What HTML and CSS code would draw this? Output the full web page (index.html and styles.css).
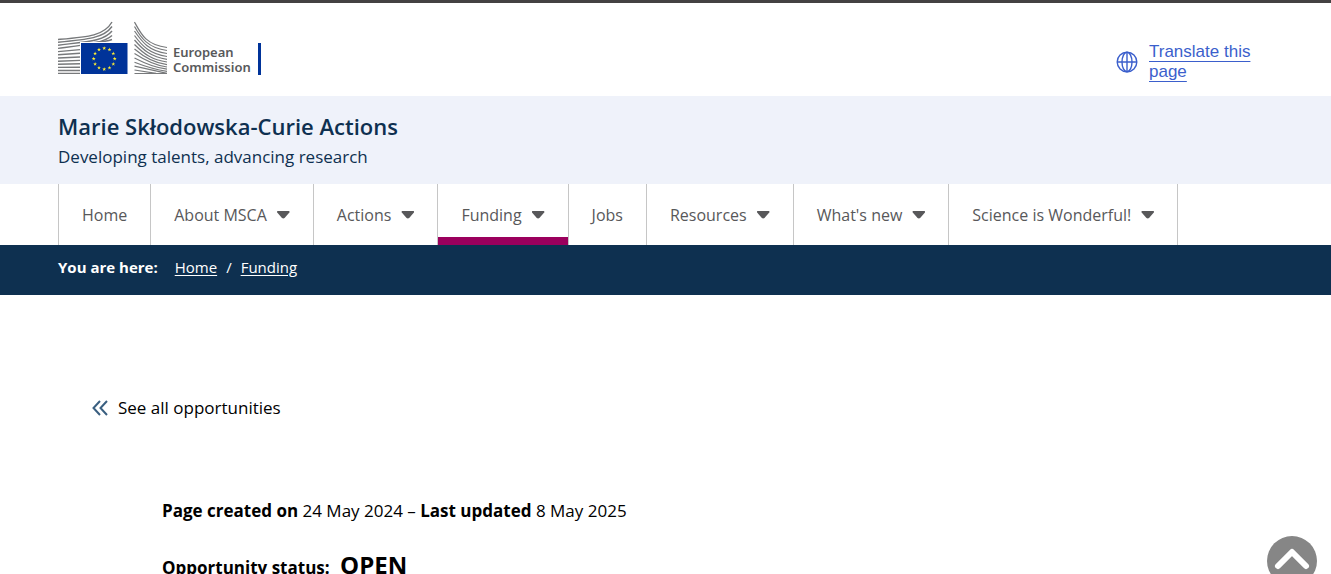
FILE: index.html
```
<!DOCTYPE html>
<html lang="en">
<head>
    <meta charset="UTF-8">
    <meta name="viewport" content="width=device-width, initial-scale=1.0">
    <title>Funding - Marie Skłodowska-Curie Actions</title>
    <link rel="stylesheet" href="styles.css">
</head>
<body>
    <!-- Header -->
    <header class="site-header">
        <a class="logo" href="#">
            <svg class="logo-mark" width="110" height="54" viewBox="0 0 110 54" aria-hidden="true">
                <g fill="none" stroke="#77797b" stroke-width="1.4">
                    <path d="M0 18.5C30 16 46 15 54 1"/>
                    <path d="M0 21.2C30 18.5 46 17 54 5.5"/>
                    <path d="M0 24.2C30 20.5 46 20 54 10"/>
                    <path d="M0 27.4C30 23.5 46 22 54 14.5"/>
                    <path d="M0 30.6L22 28.6M36 21.5Q49 20.5 54 18.5"/>
                    <path d="M0 33.8L22 32.3M0 37L22 36M0 40.2L22 39.4M0 43.3L22 42.8M0 46.4L22 46.2M0 49.5H22M0 52.4H22"/>
                </g>
                <g fill="none" stroke="#77797b" stroke-width="1.2">
                    <path d="M76.5 1C83 13 88 24 109 26.5"/>
                    <path d="M76.5 5.5C83 17 90 27 109 29.5"/>
                    <path d="M76.5 10C84 21 91 30 109 32.5"/>
                    <path d="M76.5 14.5C84 25 92 33 109 35.5"/>
                    <path d="M76.5 19C85 29 93 36 109 38.3"/>
                    <path d="M76.5 23.5C86 33 94 39 109 41"/>
                    <path d="M76.5 28C87 37 96 42 109 43.6"/>
                    <path d="M76.5 32.5C88 40 98 44.5 109 46"/>
                    <path d="M76.5 37C89 43.5 99 47 109 48.2"/>
                    <path d="M76.5 41.2C90 46.5 100 49 109 50.3"/>
                    <path d="M76.5 45.2L109 52.4M76.5 49L98 52.4M76.5 52.5H109"/>
                </g>
                <path fill="#fff" d="M22 21H70V54H22z"/>
                <path fill="#039" d="M23 22H69.5V53H23z"/>
                <defs>
                    <path id="star" fill="#fe3" d="M0-2L.5-.6H1.9L.8.3 1.2 1.7 0 .8-1.2 1.7-.8.3-1.9-.6H-.5z"/>
                </defs>
                <use href="#star" x="46.2" y="27.2"/>
                <use href="#star" x="51.5" y="28.6"/>
                <use href="#star" x="55.3" y="32.5"/>
                <use href="#star" x="56.7" y="37.7"/>
                <use href="#star" x="55.3" y="43"/>
                <use href="#star" x="51.5" y="46.8"/>
                <use href="#star" x="46.2" y="48.2"/>
                <use href="#star" x="41" y="46.8"/>
                <use href="#star" x="37.1" y="43"/>
                <use href="#star" x="35.7" y="37.7"/>
                <use href="#star" x="37.1" y="32.5"/>
                <use href="#star" x="41" y="28.6"/>
            </svg>
            <span class="logo-text">
                <span>European</span>
                <span>Commission</span>
            </span>
        </a>
        <div class="translate">
            <svg width="22" height="22" viewBox="0 0 22 22" fill="none" stroke="#3b5fcc" stroke-width="1.4" aria-hidden="true">
                <circle cx="11" cy="11" r="9.8"/>
                <ellipse cx="11" cy="11" rx="5" ry="9.8"/>
                <path d="M11 1.2v19.6M1.2 11h19.6"/>
            </svg>
            <a href="#">Translate this page</a>
        </div>
    </header>

    <!-- Site name -->
    <div class="banner">
        <h1>Marie Skłodowska-Curie Actions</h1>
        <p>Developing talents, advancing research</p>
    </div>

    <!-- Main menu -->
    <nav class="menu">
        <ul>
            <li><a href="#">Home</a></li>
            <li><a class="dropdown" href="#">About MSCA</a></li>
            <li><a class="dropdown" href="#">Actions</a></li>
            <li class="active"><a class="dropdown" href="#">Funding</a></li>
            <li><a href="#">Jobs</a></li>
            <li><a class="dropdown" href="#">Resources</a></li>
            <li><a class="dropdown" href="#">What's new</a></li>
            <li><a class="dropdown" href="#">Science is Wonderful!</a></li>
        </ul>
    </nav>

    <!-- Breadcrumb -->
    <nav class="breadcrumb" aria-label="Breadcrumb">
        <strong>You are here:</strong>
        <a href="#">Home</a>
        <span>/</span>
        <a href="#">Funding</a>
    </nav>

    <main class="content">
        <a class="back-link" href="#">
            <svg width="16" height="16" viewBox="0 0 16 16" fill="none" stroke="#3a5f80" stroke-width="2" aria-hidden="true">
                <path d="M8 1L1.5 8 8 15M15 1L8.5 8 15 15"/>
            </svg>
            See all opportunities
        </a>
        <div class="details">
            <p><strong>Page created on</strong> 24 May 2024 – <strong>Last updated</strong> 8 May 2025</p>
            <p class="status"><strong>Opportunity status:</strong> <strong class="status-value">OPEN</strong></p>
        </div>
    </main>

    <button class="to-top" type="button" aria-label="Back to top">
        <svg width="50" height="50" viewBox="0 0 50 50" fill="none" stroke="#fff" stroke-width="6" stroke-linecap="round" stroke-linejoin="round" aria-hidden="true">
            <path d="M11 30L25 16 39 30"/>
        </svg>
    </button>
</body>
</html>
```
FILE: styles.css
```
* {
    box-sizing: border-box;
}
html {
    overflow: hidden;
}
body {
    margin: 0;
    font-family: "Open Sans", "Noto Sans", sans-serif;
    font-size: 17px;
    color: #000;
    background-color: #fff;
}
h1, p, ul {
    margin: 0;
    padding: 0;
}
.site-header {
    display: flex;
    justify-content: space-between;
    align-items: flex-start;
    border-top: 3px solid #444142;
    padding: 18px 72px 14px 58px;
}
.logo {
    display: flex;
    align-items: flex-end;
    gap: 5px;
    text-decoration: none;
}
.logo-mark {
    display: block;
}
.logo-text {
    display: flex;
    flex-direction: column;
    border-right: 3px solid #039;
    padding: 2px 7px 0 0;
    font-family: "Noto Sans", sans-serif;
    font-size: 13px;
    font-weight: 600;
    line-height: 15px;
    color: #58595b;
}
.translate {
    display: flex;
    align-items: center;
    gap: 11px;
    padding-top: 21px;
    width: 143px;
    font-family: "Liberation Sans", Arial, sans-serif;
    line-height: 20px;
}
.translate svg {
    flex-shrink: 0;
}
.translate a {
    color: #3b5fcc;
    text-underline-offset: 4px;
}
.banner {
    background-color: #eff2fa;
    padding: 15px 58px 12px;
    color: #0e3050;
}
.banner h1 {
    font-size: 22px;
    font-weight: 600;
    line-height: 30px;
}
.banner p {
    line-height: 31px;
}
.menu {
    padding-left: 58px;
}
.menu ul {
    display: flex;
    list-style: none;
    border-left: 1px solid #c6c6c6;
}
.menu li {
    border-right: 1px solid #c6c6c6;
}
.menu a {
    display: flex;
    align-items: center;
    gap: 10px;
    height: 61px;
    padding: 0 23px;
    font-size: 16px;
    color: #58585a;
    text-decoration: none;
}
.menu .active a {
    box-shadow: inset 0 -8px #9b005d;
}
.dropdown::after {
    content: "";
    width: 13px;
    height: 8px;
    background-color: #58585a;
    clip-path: polygon(8% 0, 92% 0, 100% 20%, 60% 94%, 50% 100%, 40% 94%, 0 20%);
}
.breadcrumb {
    display: flex;
    gap: 9px;
    background-color: #0e3050;
    padding: 10px 58px 16px;
    font-size: 15px;
    line-height: 24px;
    color: #fff;
}
.breadcrumb strong {
    margin-right: 8px;
}
.breadcrumb a {
    color: #fff;
    text-underline-offset: 2px;
}
.content {
    padding: 100px 92px 0;
}
.back-link {
    display: inline-flex;
    align-items: center;
    gap: 10px;
    line-height: 26px;
    color: #000;
    text-decoration: none;
}
.details {
    padding: 77px 70px 0;
}
.details p {
    line-height: 26px;
}
.details .status {
    margin-top: 25px;
    line-height: 32px;
}
.status-value {
    margin-left: 6px;
    font-size: 24px;
}
.to-top {
    position: fixed;
    right: 14px;
    bottom: -12px;
    width: 50px;
    height: 50px;
    padding: 0;
    border: 0;
    border-radius: 50%;
    background-color: #868686;
    cursor: pointer;
}
```
